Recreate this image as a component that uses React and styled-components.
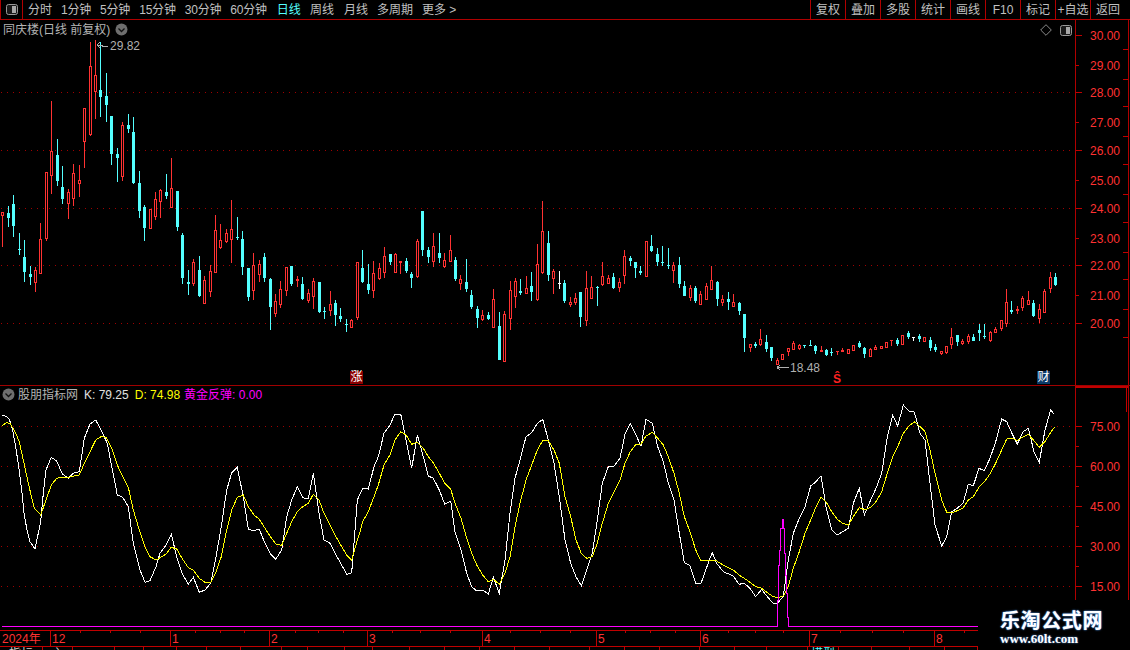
import React from 'react';
import styled, { createGlobalStyle } from 'styled-components';

const RED = '#ff3232';
const LINE = '#b00000';
const FONT = `"Liberation Sans", "Noto Sans CJK SC", sans-serif`;

const Global = createGlobalStyle`
  html, body { margin: 0; padding: 0; background: #000; }
  body { font-family: ${FONT}; }
`;

const Page = styled.div`
  position: relative;
  width: 1130px;
  height: 650px;
  overflow: hidden;
  background: #000;
  color: #c0c0c0;
  font: 12px/1 ${FONT};
  display: flex;
  flex-direction: column;
`;
const Toolbar = styled.div`
  height: 19px;
  border-bottom: 1px solid ${LINE};
  display: flex;
  align-items: stretch;
  flex: none;
`;
const IconCell = styled.div`
  width: 23px;
  border-right: 1px solid ${LINE};
  border-left: 1px solid ${LINE};
  box-sizing: border-box;
  display: flex;
  align-items: center;
  justify-content: center;
`;
const Tabs = styled.div`
  display: flex;
  align-items: center;
  gap: 9px;
  padding-left: 5px;
`;
const Tab = styled.span`
  color: ${p => (p.$active ? '#54ffff' : '#c0c0c0')};
  letter-spacing: ${p => (p.$tight ? '-0.2px' : '0')};
  margin-left: ${p => (p.$wide ? '1px' : '0')};
  white-space: nowrap;
`;
const Buttons = styled.div`
  margin-left: auto;
  padding-right: 5px;
  display: flex;
`;
const ToolButton = styled.div`
  width: 35px;
  box-sizing: border-box;
  border-left: 1px solid ${LINE};
  display: flex;
  align-items: center;
  justify-content: center;
  white-space: nowrap;
`;
const PanelRow = styled.div`
  display: flex;
  flex: none;
  height: ${p => p.$h}px;
  border-bottom: ${p => (p.$rule ? `1px solid #a00000` : 'none')};
  box-sizing: border-box;
`;
const Plot = styled.div`
  position: relative;
  width: 1075px;
  flex: none;
`;
const ChartSvg = styled.svg`
  display: block;
  width: 100%;
  height: 100%;
`;
const Heading = styled.div`
  position: absolute;
  left: ${p => p.$left}px;
  top: ${p => p.$top}px;
  display: flex;
  align-items: center;
  gap: ${p => p.$gap}px;
  white-space: nowrap;
`;
const Label = styled.span`
  color: ${p => p.$color || '#b4b4b4'};
  margin-left: ${p => p.$ml || 0}px;
`;
const CornerTools = styled.div`
  position: absolute;
  right: 3px;
  top: 4px;
  display: flex;
  align-items: center;
  gap: 8px;
`;
const Note = styled.span`
  position: absolute;
  color: #b0b0b0;
  white-space: nowrap;
`;
const Flag = styled.span`
  position: absolute;
  width: 13px;
  height: 13px;
  background: ${p => p.$bg};
  color: #fff;
  font-size: 12px;
  line-height: 13px;
  text-align: center;
`;
const Dollar = styled.span`
  position: absolute;
  color: #ff2020;
  font: bold 12px/12px "Liberation Sans", sans-serif;
`;
const Axis = styled.div`
  position: relative;
  flex: none;
  width: 54px;
  box-sizing: border-box;
  border-left: 1px solid ${LINE};
  border-right: 1px solid ${LINE};
  border-top: ${p => (p.$thick ? `2px solid #c00000` : 'none')};
`;
const AxisLabel = styled.span`
  position: absolute;
  left: 14px;
  color: ${RED};
  transform: translateY(calc(-50% + 1px));
`;
const AxisTick = styled.i`
  position: absolute;
  left: ${p => p.$left}px;
  width: ${p => p.$w}px;
  height: 1px;
  background: #c00000;
`;
const CornerEdge = styled.i`
  position: absolute;
  right: 1px;
  top: 0;
  width: 1px;
  height: 24px;
  background: #c00000;
`;
const DateAxis = styled.div`
  position: relative;
  flex: none;
  width: 978px;
  height: 17px;
  box-sizing: border-box;
  border-top: 1px solid #c00000;
  border-bottom: 1px solid #c00000;
`;
const MonthMark = styled.span`
  position: absolute;
  top: 0;
  height: 15px;
  box-sizing: border-box;
  border-left: 1px solid #c00000;
  padding-left: 1px;
  color: ${RED};
  line-height: 16px;
  white-space: nowrap;
`;
const YearMark = styled.span`
  position: absolute;
  left: 2px;
  top: 0;
  color: ${RED};
  line-height: 16px;
`;
const DayTick = styled.i`
  position: absolute;
  top: 0;
  width: 1px;
  height: 2px;
  background: #c00000;
`;
const TabStrip = styled.div`
  display: flex;
  flex: none;
  width: 978px;
  height: 3px;
  overflow: hidden;
`;
const StripCell = styled.div`
  flex: none;
  box-sizing: border-box;
  border-right: 1px solid #c00000;
  padding-top: 1px;
  text-align: center;
  color: ${p => p.$color || '#d0d0d0'};
  line-height: 12px;
  white-space: nowrap;
`;
const Watermark = styled.div`
  position: absolute;
  right: 0;
  bottom: 0;
  width: 152px;
  height: 50px;
  background: #000;
  display: flex;
  flex-direction: column;
  box-sizing: border-box;
  padding: 10px 0 0 22px;
  color: #fff;
`;
const MarkTitle = styled.div`
  font: bold 20px/20px "Noto Sans CJK SC", sans-serif;
  letter-spacing: 0.6px;
  text-shadow: 0 0 2px #4a8fe0, 0 0 1px #4a8fe0;
`;
const MarkUrl = styled.div`
  margin-top: 1px;
  font: bold 13px/16px "Liberation Serif", serif;
  text-shadow: 0 0 2px #4a8fe0;
`;

const candles = `r 212 212 215 247|c 206 213 218 227|c 195 204 226 237|c 233 249 250 255|c 240 257 272 282|c 266 274 277 285|r 267 270 282 292|r 223 239 273 273|r 172 172 238 241|r 101 151 175 194|c 139 155 181 186|c 166 187 199 204|r 189 192 203 219|r 164 173 198 206|r 165 180 183 197|r 108 108 141 168|r 42 66 134 136|r 40 75 91 119|c 42 90 97 117|c 73 96 105 122|c 116 116 154 165|c 148 154 158 182|r 122 125 176 181|c 114 125 129 133|c 117 132 183 184|c 171 183 211 218|c 205 207 228 241|r 209 209 228 229|r 192 199 216 220|r 189 190 201 218|c 174 192 196 199|r 158 188 207 207|c 191 191 227 231|c 233 235 278 284|c 270 282 284 295|r 259 262 283 286|c 256 270 296 297|r 276 280 303 303|r 265 271 291 297|r 215 230 272 272|r 224 240 247 249|r 229 233 241 243|r 200 229 239 263|c 217 237 238 240|c 231 239 267 275|c 268 268 297 301|r 253 265 290 300|r 260 264 274 282|c 253 257 278 282|c 278 279 307 330|r 294 301 313 317|r 281 289 304 308|r 267 267 290 296|c 266 266 284 286|f 276 279 281 287|c 277 284 299 300|r 289 293 300 303|r 278 281 296 309|c 282 282 312 313|c 307 311 312 319|r 291 304 310 316|c 300 303 315 326|c 308 316 319 322|c 319 324 325 332|r 319 320 327 328|r 262 262 317 320|c 250 268 282 283|c 264 284 290 294|r 261 273 290 298|r 263 268 278 280|r 247 256 272 278|c 254 254 262 265|r 253 254 272 272|f 261 261 263 274|c 258 261 271 273|c 272 274 278 288|r 239 241 276 278|c 211 211 250 256|c 247 250 257 263|r 233 246 261 267|c 233 253 258 263|r 253 260 266 268|r 235 250 261 262|c 257 260 279 281|r 275 279 283 290|c 259 282 289 292|c 290 295 307 309|c 306 309 318 328|r 310 315 319 321|c 312 315 319 320|r 289 299 327 327|c 312 326 360 360|r 311 314 361 361|r 281 290 318 330|r 278 281 296 308|c 279 291 293 295|r 276 288 293 293|c 272 286 292 301|r 244 264 299 301|r 201 231 272 274|c 231 243 275 281|r 269 271 278 294|w 271 283 284 289|c 280 283 301 303|r 297 302 304 307|r 293 298 302 305|c 292 292 317 327|r 271 288 320 326|r 276 287 298 298|c 286 287 288 306|r 262 276 284 286|r 275 278 283 284|c 273 277 288 289|r 278 282 287 292|r 250 256 275 284|c 256 258 261 266|c 262 262 268 278|c 266 271 273 275|r 241 241 276 276|c 235 246 251 252|c 248 254 262 266|c 246 262 263 266|c 248 265 266 269|r 262 265 270 283|c 257 265 284 288|c 281 286 296 296|r 285 288 297 301|c 286 288 301 303|r 291 294 304 304|r 283 286 299 299|r 266 280 289 289|c 281 282 299 306|r 295 299 302 306|c 292 299 302 310|r 294 302 306 306|c 302 303 311 315|c 314 314 338 352|r 344 344 347 352|c 342 344 346 348|r 329 339 344 346|c 335 342 349 352|c 347 347 358 361|r 358 360 364 364|r 354 354 359 359|r 348 348 351 356|r 341 343 349 349|r 344 345 348 350|c 345 345 346 348|c 340 345 346 346|c 345 346 351 354|f 346 350 352 352|c 349 350 355 356|c 348 352 353 356|f 351 351 352 355|f 348 350 352 352|r 349 349 353 353|r 345 345 350 351|c 341 343 347 348|c 347 348 354 358|r 348 349 356 357|r 345 347 349 350|r 346 346 348 349|r 342 342 347 348|f 340 340 341 346|c 338 340 344 346|r 335 335 344 344|c 331 333 337 339|w 337 337 338 341|c 334 336 339 342|r 337 337 341 342|c 337 340 348 351|c 344 347 350 352|r 351 351 353 355|r 346 346 352 354|r 328 337 344 349|c 335 335 342 346|r 339 341 343 345|r 334 336 341 344|c 334 337 341 341|c 324 330 333 341|c 324 336 337 339|r 331 332 340 342|r 327 329 332 332|r 320 320 328 331|r 289 302 323 327|c 301 310 312 314|f 306 309 311 314|r 296 298 307 311|r 291 300 304 304|c 300 303 316 317|r 304 309 318 323|r 289 291 312 312|r 272 277 288 293|c 273 277 285 286`
  .split('|').map(s => { const [t, ...v] = s.split(' '); return [t, ...v.map(Number)]; });

const colorOf = { r: RED, f: RED, c: '#54ffff', w: '#ffffff' };

const Candle = ({ d, i }) => {
  const [t, hi, top, bot, lo] = d;
  const x = Math.floor(2.75 + 5.455 * i);
  const color = colorOf[t];
  const thin = top === bot;
  return (
    <g>
      <rect x={x} y={hi} width={1} height={Math.max(lo - hi, 1)} fill={color} />
      {t === 'r' && !thin
        ? <rect x={x - 0.5} y={top + 0.5} width={2} height={bot - top} fill="#000" stroke={color} />
        : <rect x={x - 1} y={top} width={3} height={Math.max(bot - top, 1)} fill={color} />}
    </g>
  );
};

const k1 = `6,45 20,50 28,58 38,90 45,130 55,190 65,270 72,340 80,385 90,425 105,447 122,365 130,280 138,210 154,172 170,183 187,222 205,235 220,220 238,215 253,115 270,72 287,60 303,90 322,130 335,200 352,285 368,292 385,320 400,430 420,510 435,547 450,542 468,500 480,460 498,435 514,403 530,470 546,520 565,553 580,532 598,577 615,570 632,550 648,470 664,380 680,270 695,218 712,202 730,290 745,387 760,392 778,388 795,430 810,460 827,478 845,450 860,350 875,300 892,260 908,293 925,296 940,220 957,340 972,420 990,430 1005,460 1022,490 1040,523 1055,518 1072,300`;
const k2 = `0,283 8,265 25,267 42,200 55,170 72,100 90,75 105,42 122,42 138,120 155,205 172,105 190,170 205,228 220,235 238,270 254,312 272,303 285,395 303,450 320,520 335,560 350,573 368,570 385,582 400,532 418,580 435,480 450,340 465,235 480,180 498,110 515,98 532,70 548,58 565,120 582,190 598,290 615,420 632,490 648,530 664,557 680,510 697,460 712,360 727,250 745,200 762,198 780,175 795,103 811,70 828,105 843,138 858,58 877,70 893,140 910,185 925,250 942,300 958,400 973,488 990,497 1007,550 1023,550`;
const k3 = `0,475 7,458 20,490 40,515 70,528 87,553 103,550 120,565 137,590 155,568 172,590 189,609 204,609 220,588 235,480 250,400 268,355 285,320 302,258 318,245 333,227 348,320 365,390 382,405 398,395 415,385 430,310 448,265 463,345 482,300 498,265 515,220 532,110 548,45 563,78 580,15 597,33 613,36 630,100 645,120 660,250 675,375 695,438 710,410 725,335 742,325 760,308 775,253 790,257 807,205 823,212 840,175 857,125 875,57 890,65 908,105 922,132 940,95 955,85 972,155 988,187 1005,90 1022,30 1033,43`;
const d1 = `6,77 20,68 30,70 45,95 58,125 70,180 85,250 103,325 122,345 138,300 154,255 170,235 187,232 205,232 222,228 238,225 253,190 270,155 287,120 303,110 318,112 335,145 352,195 368,230 385,262 400,330 418,390 435,440 450,470 468,480 485,470 498,462 514,442 530,447 546,475 565,503 580,510 598,535 615,547 632,547 648,515 664,470 680,390 695,330 712,292 730,285 745,320 762,345 778,358 795,385 810,408 827,432 845,436 860,400 875,365 892,335 908,320 925,310 940,283 957,300 972,340 990,375 1005,405 1022,435 1040,465 1055,480 1072,420`;
const d2 = `0,395 8,365 25,335 42,290 55,255 72,195 90,165 105,120 122,95 138,105 155,133 172,127 190,145 205,170 220,188 238,220 254,250 272,268 285,310 303,355 320,415 335,460 350,495 368,525 385,545 400,538 418,553 435,520 450,470 465,380 480,310 498,240 515,195 532,150 548,122 565,122 582,150 598,190 615,290 632,350 648,420 664,460 680,475 697,470 712,430 727,370 745,310 762,275 780,240 795,190 811,155 828,133 843,133 858,108 877,97 893,115 910,135 925,170 942,220 958,280 973,350 990,395 1007,450 1023,482`;
const d3 = `0,482 15,480 40,495 70,510 87,525 103,535 120,547 137,560 155,565 172,578 190,590 205,593 220,588 235,560 250,505 268,455 285,400 302,360 318,320 333,292 348,305 365,335 382,358 398,370 415,375 430,350 448,323 465,330 482,322 498,305 515,275 532,220 548,170 563,140 580,100 597,78 613,65 630,80 645,95 660,150 675,220 695,300 710,337 725,338 742,332 760,323 775,300 790,290 807,262 823,245 840,222 857,190 875,150 890,117 908,115 922,122 940,110 955,103 972,122 988,142 1005,125 1022,97 1033,82`;

const seg = (s, x0) => s.split(' ').map(p => {
  const [a, b] = p.split(',').map(Number);
  return `${(x0 + a / 3).toFixed(1)},${(400 + b / 3).toFixed(1)}`;
}).join(' ');
const kLine = [seg(k1, 0), seg(k2, 360), seg(k3, 710)].join(' ');
const dLine = [seg(d1, 0), seg(d2, 360), seg(d3, 710)].join(' ');
const spike = '2,626.5 777.5,626.5 777.5,600 778.5,600 778.5,565 779.5,565 779.5,550 780.5,550 780.5,528 782.5,528 782.5,519 783.5,519 783.5,528 784.5,528 784.5,553 785.5,553 785.5,575 786.5,575 786.5,593 787.5,593 787.5,617 788.5,617 788.5,626.5 978,626.5';

const dotPath = ys => ys.map(y => {
  let d = '';
  for (let x = 1; x < 1075; x += 6) d += `M${x} ${y}h1v1h-1z`;
  return d;
}).join('');

const GridDots = ({ ys }) => <path d={dotPath(ys)} fill="#a00000" />;

const WindowIcon = () => (
  <svg width="12" height="11" viewBox="0 0 12 11">
    <rect x="0.5" y="0.5" width="11" height="10" rx="2" fill="#1a1a1a" stroke="#999" />
    <rect x="6" y="2" width="4" height="7" fill="#a8a8a8" />
  </svg>
);
const Chevron = () => (
  <svg width="13" height="13" viewBox="0 0 13 13">
    <circle cx="6.5" cy="6.5" r="6" fill="#6e6e6e" />
    <path d="M3.5 5.5 L6.5 8.5 L9.5 5.5" fill="none" stroke="#111" strokeWidth="1.3" />
  </svg>
);
const Diamond = () => (
  <svg width="12" height="12" viewBox="0 0 12 12">
    <path d="M6 0.7 L11.3 6 L6 11.3 L0.7 6 Z" fill="none" stroke="#8a8a8a" />
  </svg>
);

const priceTicks = [
  [30, 35], [29, 65], [28, 92], [27, 122], [26, 150], [25, 180],
  [24, 208], [23, 238], [22, 265], [21, 295], [20, 323],
];
const kdTicks = [[75, 426], [60, 466], [45, 506], [30, 546], [15, 586]];
const months = [['12', 50], ['1', 170], ['2', 269], ['3', 367], ['4', 482], ['5', 596], ['6', 700], ['7', 809], ['8', 934]];
const dayTicks = [80, 110, 140, 195, 220, 244, 295, 318, 343, 392, 420, 450, 510, 540, 570, 625, 650, 675, 728, 755, 783, 840, 872, 903, 964];
const stripEdges = [43, 73, 115, 144, 177, 207, 241, 282, 308, 345, 373, 410, 445, 480, 515, 550, 590, 625, 660, 700, 735, 767, 808, 839, 872, 910, 945, 978];
const stripText = { 0: ['指标'], 1: ['主'], 22: ['一'], 23: ['模型', '#54ffff'] };
const tabs = [
  { t: '分时' }, { t: '1分钟', tight: true }, { t: '5分钟', tight: true }, { t: '15分钟', tight: true },
  { t: '30分钟', tight: true }, { t: '60分钟', tight: true }, { t: '日线', wide: true, active: true },
  { t: '周线' }, { t: '月线', wide: true }, { t: '多周期' }, { t: '更多 >' },
];
const buttons = ['复权', '叠加', '多股', '统计', '画线', 'F10', '标记', '+自选', '返回'];

export default function App() {
  return (
    <Page>
      <Global />
      <Toolbar>
        <IconCell><WindowIcon /></IconCell>
        <Tabs>
          {tabs.map(({ t, tight, wide, active }) => (
            <Tab key={t} $active={active} $tight={tight} $wide={wide}>{t}</Tab>
          ))}
        </Tabs>
        <Buttons>
          {buttons.map(b => <ToolButton key={b}>{b}</ToolButton>)}
        </Buttons>
      </Toolbar>

      <PanelRow $h={366} $rule>
        <Plot>
          <ChartSvg viewBox="0 20 1075 365" shapeRendering="crispEdges">
            <GridDots ys={[92, 150, 208, 265, 323]} />
            {candles.map((d, i) => <Candle key={i} d={d} i={i} />)}
            <path d="M97 45 L108 47 M97 45 L100 42 M97 45 L100 48" stroke="#b0b0b0" fill="none" />
            <path d="M777 367.5 L789 367.5 M777 367.5 L780 365 M777 367.5 L780 370" stroke="#b0b0b0" fill="none" />
          </ChartSvg>
          <Heading $left={3} $top={3} $gap={5}>
            <Label>同庆楼(日线 前复权)</Label>
            <Chevron />
          </Heading>
          <CornerTools><Diamond /><WindowIcon /></CornerTools>
          <Note style={{ left: 110, top: 20 }}>29.82</Note>
          <Note style={{ left: 790, top: 342 }}>18.48</Note>
          <Flag $bg="#8b0000" style={{ left: 350, top: 351 }}>涨</Flag>
          <Dollar style={{ left: 833, top: 353 }}>Ŝ</Dollar>
          <Flag $bg="#0c3a68" style={{ left: 1037, top: 351 }}>财</Flag>
        </Plot>
        <Axis>
          {priceTicks.map(([v, y]) => (
            <React.Fragment key={v}>
              <AxisTick $left={0} $w={v % 2 === 0 ? 6 : 3} style={{ top: y - 20 }} />
              <AxisLabel style={{ top: y - 20 }}>{v.toFixed(2)}</AxisLabel>
              <AxisTick $left={47} $w={5} style={{ top: y - 6 }} />
            </React.Fragment>
          ))}
        </Axis>
      </PanelRow>

      <PanelRow $h={244}>
        <Plot>
          <ChartSvg viewBox="0 386 1075 244" shapeRendering="crispEdges">
            <GridDots ys={[426, 466, 506, 546, 586]} />
            <polyline points={kLine} fill="none" stroke="#fff" />
            <polyline points={dLine} fill="none" stroke="#ffff00" />
            <polyline points={spike} fill="none" stroke="#ff00ff" />
          </ChartSvg>
          <Heading $left={2} $top={2} $gap={3}>
            <Chevron />
            <Label>股朋指标网</Label>
            <Label $color="#e0e0e0" $ml={3}>K: 79.25</Label>
            <Label $color="#ffff00" $ml={3}>D: 74.98</Label>
            <Label $color="#ff00ff" $ml={1}>黄金反弹: 0.00</Label>
          </Heading>
        </Plot>
        <Axis $thick>
          <CornerEdge />
          {kdTicks.map(([v, y]) => (
            <React.Fragment key={v}>
              <AxisTick $left={0} $w={6} style={{ top: y - 388 }} />
              <AxisTick $left={0} $w={3} style={{ top: y - 368 }} />
              <AxisLabel style={{ top: y - 388 }}>{v.toFixed(2)}</AxisLabel>
            </React.Fragment>
          ))}
        </Axis>
      </PanelRow>

      <DateAxis>
        <YearMark>2024年</YearMark>
        {dayTicks.map(x => <DayTick key={x} style={{ left: x }} />)}
        {months.map(([m, x]) => <MonthMark key={x} style={{ left: x }}>{m}</MonthMark>)}
      </DateAxis>
      <TabStrip>
        {stripEdges.map((e, i) => (
          <StripCell key={e} $color={stripText[i]?.[1]} style={{ width: e - (i ? stripEdges[i - 1] : 0) }}>
            {stripText[i]?.[0]}
          </StripCell>
        ))}
      </TabStrip>

      <Watermark>
        <MarkTitle>乐淘公式网</MarkTitle>
        <MarkUrl>www.60lt.com</MarkUrl>
      </Watermark>
    </Page>
  );
}
